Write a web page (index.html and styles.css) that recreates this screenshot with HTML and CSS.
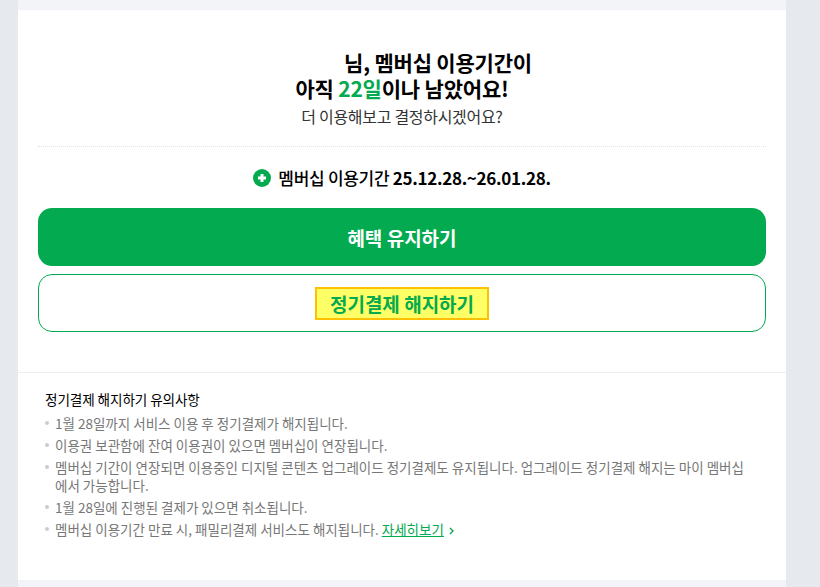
FILE: index.html
```html
<!DOCTYPE html>
<html lang="en">
<head>
    <meta charset="UTF-8">
    <meta name="viewport" content="width=device-width, initial-scale=1.0">
    <title>정기결제 해지하기</title>
    <link rel="stylesheet" href="styles.css">
</head>
<body>
    <div class="panel">
        <div class="main">
            <h1 class="title"><span class="name-blank"></span>님, 멤버십 이용기간이<br>아직 <em>22일</em>이나 남았어요!</h1>
            <p class="subtitle">더 이용해보고 결정하시겠어요?</p>
            <div class="period">
                <svg class="plus-icon" width="18" height="18" viewBox="0 0 18 18">
                    <circle cx="9" cy="9" r="9" fill="#03aa4f"/>
                    <path d="M9 5v8M5 9h8" stroke="#fff" stroke-width="3"/>
                </svg>
                <span>멤버십 이용기간 <b>25.12.28.~26.01.28.</b></span>
            </div>
            <button class="btn btn-keep">혜택 유지하기</button>
            <button class="btn btn-cancel"><span class="highlight">정기결제 해지하기</span></button>
        </div>
        <div class="notice">
            <h2 class="notice-title">정기결제 해지하기 유의사항</h2>
            <ul class="notice-list">
                <li>1월 28일까지 서비스 이용 후 정기결제가 해지됩니다.</li>
                <li>이용권 보관함에 잔여 이용권이 있으면 멤버십이 연장됩니다.</li>
                <li>멤버십 기간이 연장되면 이용중인 디지털 콘텐츠 업그레이드 정기결제도 유지됩니다. 업그레이드 정기결제 해지는 마이 멤버십에서 가능합니다.</li>
                <li>1월 28일에 진행된 결제가 있으면 취소됩니다.</li>
                <li>멤버십 이용기간 만료 시, 패밀리결제 서비스도 해지됩니다. <a class="more" href="#">자세히보기</a><svg class="chevron" width="5" height="8" viewBox="0 0 5 8"><path d="M1 1l3 3-3 3" fill="none" stroke="#03aa4f" stroke-width="1.4"/></svg></li>
            </ul>
        </div>
    </div>
</body>
</html>
```

FILE: styles.css
```css
html, body {
    height: 100%;
}
body {
    margin: 0;
    overflow: hidden;
    background: #e6eaee;
    font-family: "Noto Sans CJK KR", "Noto Sans", sans-serif;
    color: #000;
}
.panel {
    width: 768px;
    height: 587px;
    margin-left: 18px;
    padding: 10px 0 7px;
    box-sizing: border-box;
    background: #f3f4f7;
}
.main {
    padding: 0 20px 40px;
    background: #fff;
    text-align: center;
    border-bottom: 1px solid #eceef0;
}
.title {
    margin: 0;
    padding-top: 39px;
    font-size: 21px;
    line-height: 26px;
    font-weight: 700;
    letter-spacing: -0.2px;
}
.title em {
    font-style: normal;
    color: #03aa4f;
}
.name-blank {
    display: inline-block;
    width: 72px;
}
.subtitle {
    margin: 3px 0 0;
    padding-bottom: 18px;
    font-size: 16px;
    line-height: 24px;
    color: #333;
    letter-spacing: -0.3px;
    border-bottom: 1px dotted #e4e4e4;
}
.period {
    display: flex;
    justify-content: center;
    align-items: center;
    gap: 7px;
    height: 61px;
    font-size: 17px;
    font-weight: 500;
    letter-spacing: -0.3px;
}
.period b {
    font-weight: 700;
}
.btn {
    display: flex;
    justify-content: center;
    align-items: center;
    width: 100%;
    height: 58px;
    border-radius: 14px;
    font-family: inherit;
    font-size: 19px;
    font-weight: 700;
    padding: 0;
}
.btn-keep {
    background: #03aa4f;
    border: 0;
    color: #fff;
}
.btn-cancel {
    margin-top: 8px;
    background: #fff;
    border: 1px solid #03aa4f;
    color: #03aa4f;
}
.highlight {
    display: inline-block;
    padding: 0 14px;
    line-height: 31px;
    background: #ffff66;
    border: 1px solid #ffc000;
    outline: 1px solid #ffc000;
    outline-offset: -2px;
}
.notice {
    height: 207px;
    padding: 17px 38px 0 27px;
    box-sizing: border-box;
    background: #fff;
}
.notice-title {
    margin: 0 0 6px;
    font-size: 13.6px;
    line-height: 18px;
    font-weight: 400;
    letter-spacing: -0.1px;
}
.notice-list {
    margin: 0;
    padding: 0;
    list-style: none;
    font-size: 13.5px;
    line-height: 18px;
    color: #777;
}
.notice-list li {
    position: relative;
    padding-left: 10px;
    margin-bottom: 4px;
}
.notice-list li::before {
    content: "";
    position: absolute;
    left: 0;
    top: 7px;
    width: 4px;
    height: 4px;
    border-radius: 50%;
    background: #ccc;
}
.more {
    color: #03aa4f;
}
.chevron {
    margin-left: 5px;
}
```
